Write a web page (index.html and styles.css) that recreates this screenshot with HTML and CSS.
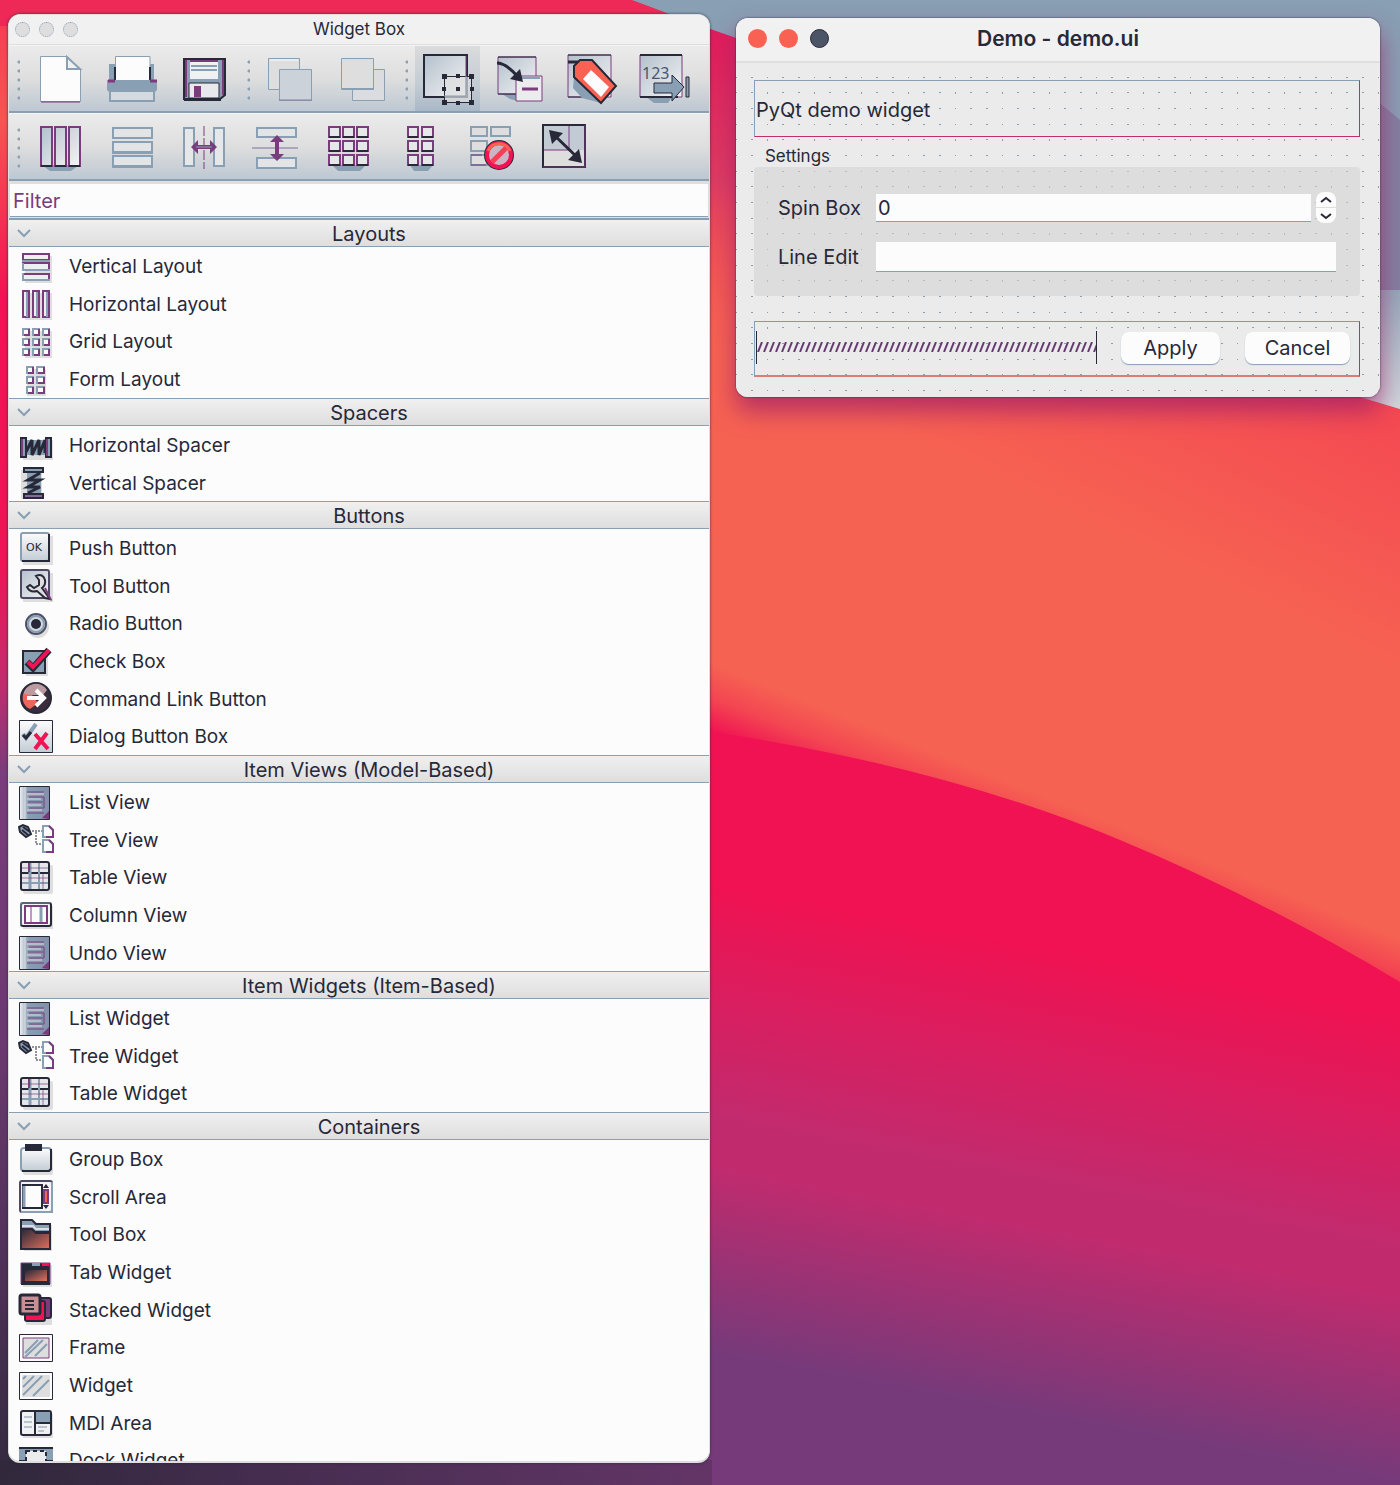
FILE: index.html
```html
<!DOCTYPE html>
<html lang="en">
<head>
<meta charset="utf-8">
<meta name="viewport" content="width=device-width, initial-scale=1">
<title>Widget Box</title>
<link rel="stylesheet" href="styles.css">
</head>
<body>
<svg class="wallpaper" viewBox="0 0 1400 1485" preserveAspectRatio="none" aria-hidden="true">
  <defs>
    <linearGradient id="wp-left" x1="0" y1="0" x2="0" y2="1">
      <stop offset="0" stop-color="#f53a54"/><stop offset=".08" stop-color="#f65552"/><stop offset=".2" stop-color="#f31354"/>
      <stop offset=".38" stop-color="#ee1656"/><stop offset=".46" stop-color="#c12d6e"/><stop offset=".52" stop-color="#7a3c7c"/>
      <stop offset=".7" stop-color="#6c3971"/><stop offset="1" stop-color="#33293f"/>
    </linearGradient>
    <linearGradient id="wp-orange" gradientUnits="userSpaceOnUse" x1="710" y1="732" x2="734" y2="672">
      <stop offset="0" stop-color="#f01252"/><stop offset=".5" stop-color="#f34552"/><stop offset="1" stop-color="#f66252"/>
    </linearGradient>
    <linearGradient id="wp-flush" gradientUnits="userSpaceOnUse" x1="1400" y1="390" x2="1290" y2="620">
      <stop offset="0" stop-color="#f01252" stop-opacity=".35"/><stop offset="1" stop-color="#f01252" stop-opacity="0"/>
    </linearGradient>
    <linearGradient id="wp-top" gradientUnits="userSpaceOnUse" x1="0" y1="40" x2="0" y2="320">
      <stop offset="0" stop-color="#e01e5c"/><stop offset=".5" stop-color="#dd3b62"/><stop offset="1" stop-color="#f55753" stop-opacity="0"/>
    </linearGradient>
    <linearGradient id="wp-low" gradientUnits="userSpaceOnUse" x1="710" y1="885" x2="625" y2="1335">
      <stop offset="0" stop-color="#f01252"/><stop offset=".5" stop-color="#c12b6e"/>
      <stop offset=".6" stop-color="#c12b6e"/><stop offset="1" stop-color="#763a7a"/>
    </linearGradient>
    <linearGradient id="wp-floor" x1="0" y1="0" x2="1" y2="0">
      <stop offset="0" stop-color="#30283b"/><stop offset=".3" stop-color="#412c4c"/><stop offset="1" stop-color="#633567"/>
    </linearGradient>
    <linearGradient id="wp-sky" gradientUnits="userSpaceOnUse" x1="0" y1="290" x2="0" y2="410">
      <stop offset="0" stop-color="#93a8ba"/><stop offset="1" stop-color="#d2d7dc"/>
    </linearGradient>
  </defs>
  <rect width="1400" height="1485" fill="url(#wp-low)"/>
  <path d="M700 0V730Q940 765 1120 840Q1260 898 1400 982V0Z" fill="url(#wp-orange)"/>
  <path d="M700 0V730Q940 765 1120 840Q1260 898 1400 982V0Z" fill="url(#wp-flush)"/>
  <rect x="700" width="700" height="330" fill="url(#wp-top)"/>
  <path d="M632 0Q690 22 736 38L1360 397L1400 409V0Z" fill="#889fb4"/>
  <path d="M1370 95L1400 120V290H1370Z" fill="#8180a0"/>
  <path d="M1360 290H1400V409L1360 397Z" fill="url(#wp-sky)"/>
  <rect width="700" height="1485" fill="url(#wp-left)"/>
  <path d="M0 0H632L705 26H0Z" fill="#ee2857"/>
  <path d="M632 0Q670 14 700 26V0Z" fill="#889fb4"/>
  <rect y="1460" width="712" height="25" fill="url(#wp-floor)"/>
</svg>

<svg class="symbols" aria-hidden="true">
  <defs>
    <linearGradient id="face" x1="0" y1="0" x2="0" y2="1"><stop offset="0" stop-color="#fcfcfc"/><stop offset="1" stop-color="#c3ccd5"/></linearGradient>
    <linearGradient id="pane" x1="0" y1="0" x2="1" y2="1"><stop offset="0" stop-color="#b4c0cc"/><stop offset="1" stop-color="#f4f4f5"/></linearGradient>
    <linearGradient id="leaf" x1="0" y1="0" x2="1" y2="0"><stop offset="0" stop-color="#f0f1f3"/><stop offset=".3" stop-color="#889fb4"/><stop offset="1" stop-color="#8390ab"/></linearGradient>
    <linearGradient id="ember" x1="0" y1="0" x2="1" y2="1"><stop offset="0" stop-color="#272838"/><stop offset="1" stop-color="#e2705c"/></linearGradient>
    <symbol id="i-list" viewBox="0 0 36 36">
      <path d="M1.500 1.500H31.500V34.500H1.500Z" fill="url(#leaf)" stroke="#272838"/>
      <path d="M7 2V34" stroke="#dedede"/>
      <path d="M9 7H26M11 12H26V23H11M10 17H25M9 28H26" fill="none" stroke="#7a3c7c"/>
      <path d="M9 9H26M9 14H23M9 20H23M9 25H24" stroke="#dedede"/>
      <path d="M24 33L31 26V34Z" fill="#7a3c7c"/>
    </symbol>
    <symbol id="i-tree" viewBox="0 0 36 36">
      <path d="M1 5L5 3L10 5L13 12L8 15L2 10Z" fill="#889fb4" stroke="#272838" stroke-width="2"/>
      <path d="M4 8L10 13M5 5L12 10" stroke="#272838" stroke-width="2"/>
      <path d="M14 9H24M18 10V22H24" fill="none" stroke="#272838" stroke-dasharray="2 1"/>
      <path d="M25 4H31L35 8V15H25ZM25 18H31L35 22V30H25Z" fill="#fcfcfc" stroke="#889fb4" stroke-width="2"/>
      <path d="M31 4L35 8V15H28M31 18L35 22V30H28" fill="none" stroke="#7a3c7c" stroke-width="2"/>
    </symbol>
    <symbol id="i-table" viewBox="0 0 36 36">
      <rect x="5" y="5" width="30" height="29" rx="2" fill="#dedede"/>
      <rect x="3" y="2" width="28" height="28" rx="2" fill="#e4e6e9" stroke="#272838" stroke-width="2"/>
      <path d="M4 13H30" stroke="#272838" stroke-width="2"/>
      <path d="M12 3V29" stroke="#889fb4" stroke-width="3"/>
      <path d="M11 3V12" stroke="#7a3c7c" stroke-width="2"/>
      <path d="M21 3V29M4 23H30" stroke="#889fb4" stroke-width="2"/>
      <path d="M4 8H30M4 18H30M25 14V29" stroke="#7a3c7c" stroke-opacity=".7"/>
    </symbol>
  </defs>
</svg>

<main class="desktop">
  <section class="window palette" aria-label="Widget Box">
    <header class="palette-title">
      <span class="lights lights-small"><i></i><i></i><i></i></span>
      <h1>Widget Box</h1>
    </header>

    <div class="toolbar" role="toolbar" aria-label="File and edit modes">
      <span class="grip"></span>
      <button type="button" aria-label="New"><svg viewBox="0 0 48 48"><path d="M4.500 1.500H31L44.500 15V46.500H4.500Z" fill="#fcfcfc" stroke="#889fb4"/><path d="M31 2V14H44Z" fill="#eef0f2" stroke="#889fb4" stroke-width="2"/><path d="M5 47H44" stroke="#7a3c7c"/></svg></button>
      <button type="button" aria-label="Print"><svg viewBox="0 0 48 48"><path d="M1 9H46V27H1Z" fill="#889fb4"/><path d="M7.500 1.500H42V26H7.500Z" fill="#fcfcfc" stroke="#889fb4"/><path d="M7 12V25M42 12V25" stroke="#272838" stroke-width="2"/><path d="M-1 25H49V35L46 38H2L-1 35Z" fill="#889fb4"/><path d="M0 26H7M42 26H49" stroke="#7a3c7c" stroke-width="3"/><path d="M2 36H46V46H2Z" fill="#d4dae0" stroke="#889fb4" stroke-width="2"/></svg></button>
      <button type="button" aria-label="Save"><svg viewBox="0 0 48 48"><path d="M4 4H45V40L40 44H4Z" fill="#889fb4" stroke="#272838" stroke-width="2"/><path d="M6 5V42M43 5V40" stroke="#7a3c7c" stroke-width="2"/><path d="M10 5H38V24H10Z" fill="#f0f1f3"/><path d="M10 6H38" stroke="#7a3c7c" stroke-width="2"/><path d="M11 11H37M11 15H37" stroke="#889fb4" stroke-width="2"/><path d="M9 28H39V43H9Z" fill="#e8e9ec" stroke="#272838"/><path d="M14 31H21V42H14Z" fill="#7a3c7c"/><path d="M4 45H41" stroke="#272838" stroke-width="2"/></svg></button>
      <span class="grip"></span>
      <button type="button" aria-label="Send to Back"><svg viewBox="0 0 48 48"><path d="M2.500 3.500H33.500V34.500H2.500Z" fill="#dedede" stroke="#889fb4"/><path d="M4 5H32" stroke="#fcfcfc"/><path d="M13.500 14.500H45.500V45.500H13.500Z" fill="#cbd2d9" stroke="#889fb4"/><path d="M13 45H46" stroke="#8a7f9f"/></svg></button>
      <button type="button" aria-label="Bring to Front"><svg viewBox="0 0 48 48"><path d="M14.500 14.500H46.500V45.500H14.500Z" fill="#dadcdf" stroke="#889fb4"/><path d="M3.500 3.500H35.500V34.500H3.500Z" fill="#dedede" stroke="#889fb4"/><path d="M4 34H36" stroke="#889fb4" stroke-width="2"/></svg></button>
      <span class="grip"></span>
      <button type="button" class="on" aria-pressed="true" aria-label="Edit Widgets"><svg viewBox="0 0 48 48"><path d="M0 0H43V42H0Z" fill="url(#pane)" stroke="#272838" stroke-width="2"/><path d="M42 1V41" stroke="#7a3c7c"/><path d="M20.500 21.500H47.500V47.500H20.500Z" fill="#dedede" fill-opacity=".7" stroke="#272838"/><path d="M42 21V41H20" fill="none" stroke="#889fb4"/><path d="M18 19h5v5h-5zM45 19h5v5h-5zM18 45h5v5h-5zM45 45h5v5h-5zM32 19h4v4h-4zM32 46h4v4h-4zM32 32h4v4h-4zM18 32h4v4h-4zM46 32h4v4h-4z" fill="#272838"/></svg></button>
      <button type="button" aria-label="Edit Signals/Slots"><svg viewBox="0 0 48 48"><path d="M6 39H22V46L14 44Z" fill="#889fb4"/><path d="M2 2H40V39H2Z" fill="url(#pane)" stroke="#7a3c7c"/><path d="M2 39H20M2 2H40" stroke="#272838"/><path d="M20 21H46V46H20Z" fill="#ececee" stroke="#7a3c7c"/><path d="M23 23H44" stroke="#889fb4" stroke-width="2"/><path d="M26 34H42" stroke="#7a3c7c" stroke-width="3"/><path d="M1 8Q10 8 22 22" fill="none" stroke="#272838" stroke-width="3"/><path d="M24 14L27 27L14 24Z" fill="#272838"/></svg></button>
      <button type="button" aria-label="Edit Buddies"><svg viewBox="0 0 48 48"><path d="M0 0H43V42H0Z" fill="url(#pane)" stroke="#7a3c7c"/><path d="M0 42H24M0 0H43" stroke="#272838"/><path d="M6 22L33 48L14 43L5 33Z" fill="#889fb4"/><path d="M6 11L12 5L24 5L48 31L33 48L6 22Z" fill="#f96252" stroke="#272838" stroke-width="2"/><path d="M23 15L41 32L33 42L15 24Z" fill="#fcfcfc"/><path d="M0 7H10" stroke="#272838" stroke-width="3"/></svg></button>
      <button type="button" aria-label="Edit Tab Order"><svg viewBox="0 0 48 48"><path d="M6 42H32L28 48H14Z" fill="#889fb4"/><path d="M0 0H42V42H0Z" fill="url(#pane)" stroke="#7a3c7c"/><path d="M0 42H38M0 0H42" stroke="#272838" stroke-width="2"/><text class="tab-digits" x="2" y="24">123</text><path d="M14 28H32V20L44 32L32 46V38H14Z" fill="#889fb4" stroke="#272838"/><path d="M46 22H49V42H46Z" fill="#889fb4" stroke="#272838"/></svg></button>
    </div>

    <div class="toolbar" role="toolbar" aria-label="Layout">
      <span class="grip"></span>
      <button type="button" aria-label="Lay Out Horizontally"><svg viewBox="0 0 48 48"><path d="M6 42H43L35 48H14Z" fill="#889fb4"/><path d="M5 4H16V43H5ZM19 4H30V43H19ZM33 4H44V43H33Z" fill="url(#pane)" stroke="#7a3c7c" stroke-width="2"/><path d="M5 43H16M19 43H30M33 43H44" stroke="#272838" stroke-width="2"/></svg></button>
      <button type="button" aria-label="Lay Out Vertically"><svg viewBox="0 0 48 48"><path d="M5 5H44V15H5ZM5 19H44V30H5ZM5 33H44V44H5Z" fill="#e3e4e6" stroke="#889fb4" stroke-width="2"/><path d="M5 15H44M5 29H44M5 43H44" stroke="#889fb4" stroke-width="2"/></svg></button>
      <button type="button" aria-label="Horizontal Splitter"><svg viewBox="0 0 48 48"><path d="M4 5H14V43H4ZM34 5H44V43H34Z" fill="#e6e7e9" stroke="#889fb4" stroke-width="2"/><path d="M24 3V46" stroke="#7a3c7c" stroke-dasharray="10 2"/><path d="M11 24L18 17V22H30V17L37 24L30 31V26H18V31Z" fill="#7a3c7c"/><path d="M16 24H32" stroke="#889fb4"/></svg></button>
      <button type="button" aria-label="Vertical Splitter"><svg viewBox="0 0 48 48"><path d="M5 5H44V14H5ZM5 35H44V45H5Z" fill="#e3e4e6" stroke="#889fb4" stroke-width="2"/><path d="M0 25H46" stroke="#7f6f9a"/><path d="M25 12L32 19H27V31H32L25 38L18 31H23V19H18Z" fill="#7a3c7c"/></svg></button>
      <button type="button" aria-label="Lay Out in a Grid"><svg viewBox="0 0 48 48"><path d="M8 42H42L36 48H14Z" fill="#889fb4"/><path d="M5 4H16V14H5ZM19 4H30V14H19ZM33 4H44V14H33ZM5 18H16V28H5ZM19 18H30V28H19ZM33 18H44V28H33ZM5 32H16V42H5ZM19 32H30V42H19ZM33 32H44V42H33Z" fill="#e6e7e9" stroke="#7a3c7c" stroke-width="2"/><path d="M5 14H16M19 14H30M33 14H44M5 28H16M19 28H30M33 28H44M5 42H16M19 42H30M33 42H44" stroke="#272838" stroke-width="2"/></svg></button>
      <button type="button" aria-label="Lay Out in a Form"><svg viewBox="0 0 48 48"><path d="M14 42H37L32 48H18Z" fill="#889fb4"/><path d="M12 4H22V14H12ZM26 4H37V14H26ZM12 18H22V28H12ZM26 18H37V28H26ZM12 32H22V42H12ZM26 32H37V42H26Z" fill="#e6e7e9" stroke="#7a3c7c" stroke-width="2"/><path d="M12 14H22M26 14H37M12 28H22M26 28H37M12 42H22M26 42H37" stroke="#272838" stroke-width="2"/></svg></button>
      <button type="button" aria-label="Break Layout"><svg viewBox="0 0 48 48"><path d="M3 4H19V13H3ZM23 4H42V13H23ZM3 18H19V28H3ZM3 32H19V42H3Z" fill="#dedede" stroke="#889fb4" stroke-width="2"/><path d="M3 32H14M3 42H18" stroke="#7a3c7c"/><circle cx="31" cy="32" r="12" fill="none" stroke="#272838" stroke-width="6"/><circle cx="31" cy="32" r="12" fill="#c9b6c4" stroke="#f31354" stroke-width="4"/><path d="M24 39L39 24" stroke="#f83e53" stroke-width="5"/><path d="M20 28A12 12 0 0 1 42 28" fill="none" stroke="#f96252" stroke-width="3"/></svg></button>
      <button type="button" aria-label="Adjust Size"><svg viewBox="0 0 48 48"><path d="M3 2H45V44H3Z" fill="#dedede" stroke="#272838" stroke-width="2"/><path d="M4 3H44V27H4Z" fill="#c2cbd4"/><path d="M29 3V27H4" fill="none" stroke="#7a3c7c"/><path d="M45 2V44H3" fill="none" stroke="#7a3c7c"/><path d="M12 10L40 37" stroke="#272838" stroke-width="3"/><path d="M9 7L23 10L12 21ZM42 40L28 37L39 26Z" fill="#272838"/></svg></button>
    </div>

    <div class="filter"><input type="text" placeholder="Filter" aria-label="Filter"></div>

    <div class="groups">
      <section>
        <h2><button type="button"><svg class="chev" viewBox="0 0 14 8"><path d="M1 1L7 7L13 1"/></svg>Layouts</button></h2>
        <ul>
          <li><svg viewBox="0 0 36 36"><path d="M7 7H34V34H7Z" fill="#dedede"/><path d="M5 5H31V11H5ZM5 14H31V21H5ZM5 25H31V31H5Z" fill="#eeeff1" stroke="#7a3c7c" stroke-width="2"/><path d="M4 12H32M4 21H32M4 31H32M5 24V32M5 14V21" stroke="#889fb4" stroke-width="2"/></svg>Vertical Layout</li>
          <li><svg viewBox="0 0 36 36"><path d="M7 7H34V34H7Z" fill="#dedede"/><path d="M5 5H11V31H5ZM15 5H21V31H15ZM25 5H31V31H25Z" fill="#eeeff1" stroke="#7a3c7c" stroke-width="2"/><path d="M9 6V31M19 6V31M29 6V31" stroke="#889fb4" stroke-width="2"/></svg>Horizontal Layout</li>
          <li><svg viewBox="0 0 36 36"><path d="M7 7H34V34H7Z" fill="#dedede"/><path d="M5 5H11V11H5ZM15 5H21V11H15ZM25 5H31V11H25ZM5 15H11V21H5ZM15 15H21V21H15ZM25 15H31V21H25ZM5 25H11V31H5ZM15 25H21V31H15ZM25 25H31V31H25Z" fill="#fcfcfc" stroke="#889fb4" stroke-width="2"/><path d="M11 5V11H6M21 5V11H16M31 5V11H26M11 15V21H6M21 15V21H16M31 15V21H26M11 25V31H6M21 25V31H16M31 25V31H26" fill="none" stroke="#7a3c7c" stroke-width="2"/></svg>Grid Layout</li>
          <li><svg viewBox="0 0 36 36"><path d="M9 7H28V34H9Z" fill="#dedede"/><path d="M9 5H15V11H9ZM19 5H26V11H19ZM9 15H15V21H9ZM19 15H26V21H19ZM9 25H15V31H9ZM19 25H26V31H19Z" fill="#fcfcfc" stroke="#889fb4" stroke-width="2"/><path d="M15 5V11H10M26 5V11H20M15 15V21H10M26 15V21H20M15 25V31H10M26 25V31H20" fill="none" stroke="#7a3c7c" stroke-width="2"/></svg>Form Layout</li>
        </ul>
      </section>
      <section>
        <h2><button type="button"><svg class="chev" viewBox="0 0 14 8"><path d="M1 1L7 7L13 1"/></svg>Spacers</button></h2>
        <ul>
          <li><svg viewBox="0 0 36 36"><path d="M5 12H35V32H5Z" fill="#dedede"/><path d="M8 12H28V27H8Z" fill="#889fb4"/><path d="M8 24L14 12V27L21 12V27L27 12V25" fill="none" stroke="#272838" stroke-width="3"/><path d="M3 10H8V29H3ZM28 10H33V29H28Z" fill="#889fb4" stroke="#272838" stroke-width="2"/><path d="M4 11V28M29 11V28" stroke="#7a3c7c" stroke-width="2"/></svg>Horizontal Spacer</li>
          <li><svg viewBox="0 0 36 36"><path d="M3 5H24V34H3Z" fill="#dedede"/><path d="M9 8H23V29H9Z" fill="#889fb4"/><path d="M10 28L22 22H10L22 15H10L22 8" fill="none" stroke="#272838" stroke-width="3"/><path d="M6 3H25V7H6ZM6 29H25V33H6Z" fill="#889fb4" stroke="#272838" stroke-width="2"/><path d="M7 31H24" stroke="#7a3c7c"/></svg>Vertical Spacer</li>
        </ul>
      </section>
      <section>
        <h2><button type="button"><svg class="chev" viewBox="0 0 14 8"><path d="M1 1L7 7L13 1"/></svg>Buttons</button></h2>
        <ul>
          <li><svg viewBox="0 0 36 36"><rect x="5" y="5" width="30" height="29" fill="#dedede"/><rect x="3" y="2" width="28" height="28" rx="2" fill="url(#face)" stroke="#889fb4" stroke-width="2"/><path d="M31 3V30H4" fill="none" stroke="#272838" stroke-width="2"/><text class="ok-mark" x="8" y="20">OK</text></svg>Push Button</li>
          <li><svg viewBox="0 0 36 36"><rect x="5" y="5" width="30" height="29" fill="#dedede"/><rect x="3" y="2" width="28" height="28" rx="2" fill="url(#pane)" stroke="#4e4a63" stroke-width="2"/><path d="M18 8Q25 5 27 12Q28 17 24 20L32 31L27 30L19 23Q12 25 9 19L12 17L16 20L21 17V12Z" fill="#dedede" stroke="#272838" stroke-width="2"/><path d="M27 20L33 32" stroke="#7a3c7c" stroke-width="2"/></svg>Tool Button</li>
          <li><svg viewBox="0 0 36 36"><circle cx="20" cy="21" r="11" fill="#dedede"/><circle cx="18" cy="18" r="10" fill="#d4dae0" stroke="#4e5068" stroke-width="2"/><circle cx="18" cy="18" r="8" fill="none" stroke="#889fb4" stroke-width="2"/><circle cx="18" cy="18" r="5" fill="#272838"/></svg>Radio Button</li>
          <li><svg viewBox="0 0 36 36"><path d="M8 9H30V32H8Z" fill="#dedede"/><path d="M5 7H27V29H5Z" fill="#889fb4" stroke="#272838" stroke-width="2"/><path d="M9 18L15 24L31 6" fill="none" stroke="#272838" stroke-width="7"/><path d="M10 18L15 23L31 6" fill="none" stroke="#f31354" stroke-width="4"/></svg>Check Box</li>
          <li><svg viewBox="0 0 36 36"><circle cx="18" cy="17" r="15" fill="#3a2c3c" stroke="#272838" stroke-width="2"/><path d="M5 14A13 13 0 0 1 29 9L25 14Z" fill="#bb9aa0"/><path d="M5 13Q3 24 12 28L20 22L14 14Z" fill="#ec6758"/><path d="M9 17H24M18 9L26 17L18 25" fill="none" stroke="#fcfcfc" stroke-width="4"/></svg>Command Link Button</li>
          <li><svg viewBox="0 0 36 36"><path d="M1.500 1.500H34.500V33.500H1.500Z" fill="url(#face)" stroke="#272838"/><path d="M5 15L8 19L18 5" fill="none" stroke="#889fb4" stroke-width="4"/><path d="M5 16L8 19L13 13" fill="none" stroke="#272838" stroke-width="3"/><path d="M17 15L30 30M29 14L17 30" stroke="#f31354" stroke-width="4"/></svg>Dialog Button Box</li>
        </ul>
      </section>
      <section>
        <h2><button type="button"><svg class="chev" viewBox="0 0 14 8"><path d="M1 1L7 7L13 1"/></svg>Item Views (Model-Based)</button></h2>
        <ul>
          <li><svg><use href="#i-list"/></svg>List View</li>
          <li><svg><use href="#i-tree"/></svg>Tree View</li>
          <li><svg><use href="#i-table"/></svg>Table View</li>
          <li><svg viewBox="0 0 36 36"><rect x="5" y="8" width="30" height="23" fill="#dedede"/><rect x="3" y="5" width="30" height="23" rx="2" fill="#f4f4f4" stroke="#272838" stroke-width="2"/><path d="M3 27V5H32" fill="none" stroke="#889fb4"/><path d="M7 8H29V25H7Z" fill="#fcfcfc" stroke="#7a3c7c" stroke-width="2"/><path d="M13 9V24" stroke="#7a3c7c"/><path d="M23 9V24" stroke="#889fb4" stroke-width="3"/></svg>Column View</li>
          <li><svg><use href="#i-list"/></svg>Undo View</li>
        </ul>
      </section>
      <section>
        <h2><button type="button"><svg class="chev" viewBox="0 0 14 8"><path d="M1 1L7 7L13 1"/></svg>Item Widgets (Item-Based)</button></h2>
        <ul>
          <li><svg><use href="#i-list"/></svg>List Widget</li>
          <li><svg><use href="#i-tree"/></svg>Tree Widget</li>
          <li><svg><use href="#i-table"/></svg>Table Widget</li>
        </ul>
      </section>
      <section>
        <h2><button type="button"><svg class="chev" viewBox="0 0 14 8"><path d="M1 1L7 7L13 1"/></svg>Containers</button></h2>
        <ul>
          <li><svg viewBox="0 0 36 36"><rect x="5" y="8" width="30" height="25" rx="2" fill="#dedede"/><rect x="3" y="6" width="30" height="23" rx="3" fill="url(#face)" stroke="#889fb4" stroke-width="2"/><path d="M33 7V27L31 29H4" fill="none" stroke="#272838" stroke-width="2"/><path d="M7 2H24V9H7Z" fill="#272838"/></svg>Group Box</li>
          <li><svg viewBox="0 0 36 36"><rect x="2" y="2" width="32" height="31" rx="2" fill="#f4f4f4" stroke="#4e4a63" stroke-width="2"/><path d="M3 33H34V3" fill="none" stroke="#889fb4" stroke-width="2"/><path d="M5 6H24V29H5Z" fill="#fcfcfc" stroke="#272838" stroke-width="2"/><path d="M6 7V28" stroke="#889fb4" stroke-width="3"/><path d="M25 9L28 5L31 9ZM25 26L28 30L31 26Z" fill="#272838"/><path d="M26 11H30V24H26Z" fill="#f96252" stroke="#7a3c7c" stroke-width="2"/></svg>Scroll Area</li>
          <li><svg viewBox="0 0 36 36"><path d="M6 8H34V34H6Z" fill="#dedede"/><path d="M3 3H14L18 7H32V15H3Z" fill="#889fb4" stroke="#272838" stroke-width="2"/><path d="M4 9H15L18 12H31" fill="none" stroke="#dedede" stroke-width="2"/><path d="M3 12H14L18 16H32V32H3Z" fill="url(#ember)" stroke="#272838" stroke-width="2"/></svg>Tool Box</li>
          <li><svg viewBox="0 0 36 36"><path d="M5 10H34V32H5Z" fill="#dedede"/><path d="M3 8H32V29H3Z" fill="#272838" stroke="#7a3c7c"/><path d="M14 8H22V11H14Z" fill="#889fb4"/><path d="M24 8H31V11H24Z" fill="#f31354"/><path d="M7 15H29V26H7Z" fill="url(#ember)"/><path d="M3 29H32" stroke="#272838" stroke-width="2"/></svg>Tab Widget</li>
          <li><svg viewBox="0 0 36 36"><rect x="8" y="9" width="26" height="24" fill="#dedede"/><rect x="14" y="6" width="19" height="20" rx="2" fill="#7a3c7c" stroke="#272838" stroke-width="2"/><rect x="7" y="9" width="20" height="20" rx="2" fill="#f31354" stroke="#272838" stroke-width="2"/><rect x="2" y="3" width="20" height="19" rx="2" fill="#c98e92" stroke="#272838" stroke-width="3"/><path d="M7 9H16M7 13H16M7 17H16" stroke="#272838" stroke-width="2"/></svg>Stacked Widget</li>
          <li><svg viewBox="0 0 36 36"><path d="M1.500 4.500H34.500V31.500H1.500Z" fill="#fcfcfc" stroke="#272838"/><path d="M5 8H31V28H5Z" fill="#dedede" stroke="#7a3c7c"/><path d="M7 23L20 10M7 27L25 10M17 26L29 14" stroke="#889fb4" stroke-width="2"/></svg>Frame</li>
          <li><svg viewBox="0 0 36 36"><path d="M1.500 4.500H34.500V31.500H1.500Z" fill="#fcfcfc" stroke="#272838"/><path d="M4 7H32V29H4Z" fill="#dedede"/><path d="M5 19L16 8M5 27L24 8M15 28L31 12M5 11L8 8" stroke="#889fb4" stroke-width="2"/></svg>Widget</li>
          <li><svg viewBox="0 0 36 36"><rect x="5" y="9" width="30" height="24" fill="#dedede"/><rect x="3" y="6" width="30" height="24" rx="2" fill="#f0f1f3" stroke="#272838" stroke-width="2"/><path d="M18 7H32V17H18Z" fill="#889fb4"/><path d="M17 6V30M17 18H33" stroke="#272838" stroke-width="2"/><path d="M6 12H14M6 17H14M6 22H14M20 22H29M20 26H26" stroke="#b9c4ce" stroke-width="2"/></svg>MDI Area</li>
          <li><svg viewBox="0 0 36 36"><path d="M1 4H35V34H1Z" fill="#889fb4"/><path d="M1 5H35" stroke="#272838" stroke-width="2"/><rect x="8" y="8" width="20" height="20" fill="#ececee" stroke="#272838" stroke-width="2" stroke-dasharray="4 3"/><path d="M1 17H7V21H1ZM29 17H35V21H29Z" fill="#272838"/></svg>Dock Widget</li>
        </ul>
      </section>
    </div>
  </section>

  <section class="window demo" aria-label="Demo">
    <header class="demo-title">
      <span class="lights"><i class="red"></i><i class="red"></i><i class="slate"></i></span>
      <h1>Demo - demo.ui</h1>
    </header>
    <form class="canvas">
      <p class="frame heading">PyQt demo widget</p>
      <fieldset>
        <legend>Settings</legend>
        <div class="fields">
          <label for="spin">Spin Box</label>
          <div class="spin">
            <input id="spin" type="text" inputmode="numeric" role="spinbutton" aria-valuenow="0" value="0">
            <span class="stepper">
              <button type="button" aria-label="Increase"><svg viewBox="0 0 12 8"><path d="M1 6L6 2L11 6"/></svg></button>
              <button type="button" aria-label="Decrease"><svg viewBox="0 0 12 8"><path d="M1 2L6 6L11 2"/></svg></button>
            </span>
          </div>
          <label for="line">Line Edit</label>
          <input id="line" type="text">
        </div>
      </fieldset>
      <div class="frame actions">
        <span class="spacer"></span>
        <button type="button">Apply</button>
        <button type="button" class="wide">Cancel</button>
      </div>
    </form>
  </section>
</main>
</body>
</html>
```
FILE: styles.css
```css
:root {
  --ink: #272838;
  --steel: #889fb4;
  --plum: #7a3c7c;
  --rose: #c12d6e;
  --coral: #f96252;
  --grey: #dedede;
  --white: #fcfcfc;
}

* { box-sizing: border-box; }

body {
  margin: 0;
  color: var(--ink);
  background: var(--plum);
  font-family: Inter, "Liberation Sans", sans-serif;
  font-size: 19px;
}

h1, h2, p, ul { margin: 0; padding: 0; font-weight: 400; }
ul { list-style: none; }
button, input { font: inherit; color: inherit; border: 0; border-radius: 0; padding: 0; margin: 0; }
button { background: none; }
svg { display: block; overflow: visible; }

.symbols { position: absolute; width: 0; height: 0; }
.wallpaper { position: absolute; inset: 0; width: 100%; height: 100%; overflow: hidden; }

.desktop {
  position: relative;
  display: flex;
  align-items: flex-start;
  gap: 26px;
  height: 100vh;
  padding: 14px 20px 22px 8px;
}

.window { overflow: hidden; border-radius: 12px; min-width: 0; }

.lights { position: absolute; left: 12px; display: flex; gap: 12px; }
.lights i { width: 19px; height: 19px; border-radius: 50%; }
.lights .red { background: var(--coral); }
.lights .slate { background: #4c5568; border: 1px solid var(--ink); }
.lights-small { left: 6px; gap: 9px; }
.lights-small i { width: 15px; height: 15px; background: var(--grey); border: 1px dotted var(--steel); }

/* widget palette */
.palette {
  flex: 701 1 0;
  display: flex;
  flex-direction: column;
  height: 100%;
  background: var(--white);
  border: 1px solid var(--grey);
  border-bottom-width: 2px;
  box-shadow: 0 0 3px rgba(39, 40, 56, .8);
}

.palette-title, .demo-title {
  position: relative;
  flex: none;
  display: flex;
  align-items: center;
  justify-content: center;
  background: #f1f1f1;
}
.palette-title { height: 30px; padding-bottom: 1px; border-bottom: 1px solid var(--grey); }
.palette-title h1 { font-size: 17px; }

.toolbar {
  flex: none;
  display: flex;
  align-items: center;
  gap: 7px;
  height: 68px;
  padding-left: 4px;
  background: linear-gradient(#ebebeb, #dedede 50%, #bdc8d2);
  border-bottom: 2px solid var(--steel);
  border-top: 1px solid #f4f4f4;
}
.toolbar button { width: 65px; height: 65px; display: grid; place-items: center; }
.toolbar button.on { background: linear-gradient(#dadbdc, #c3ccd4 60%, #a9b8c6); }
.toolbar svg { width: 48px; height: 48px; }
.tab-digits { font: 16px "Noto Sans", sans-serif; fill: #4a5670; }
.grip {
  width: 7px;
  height: 42px;
  background: radial-gradient(circle at 6px 4px, var(--steel) 1px, transparent 2px) 0 0 / 8px 9px;
}

.filter { flex: none; padding: 3px 1px 1px; background: var(--grey); border-bottom: 1px solid var(--steel); }
.filter input {
  display: block;
  width: 100%;
  height: 33px;
  padding: 1px 3px 0;
  font-size: 20px;
  background: var(--white);
  border-bottom: 1px solid var(--steel);
}
.filter input::placeholder { color: var(--plum); opacity: 1; }

.groups { flex: 1; min-height: 0; overflow: hidden; }
.groups h2 button {
  position: relative;
  display: block;
  width: 100%;
  height: 28px;
  padding: 2px 0 0 20px;
  font-size: 20px;
  line-height: 24px;
  text-align: center;
  background: linear-gradient(#f0f0f0, #dedede);
  border-top: 1px solid var(--steel);
  border-bottom: 1px solid var(--steel);
}
.chev { position: absolute; left: 8px; top: 9px; width: 14px; height: 8px; }
.chev path { fill: none; stroke: var(--steel); stroke-width: 2; }
.groups li {
  display: flex;
  align-items: center;
  gap: 15px;
  height: 38px;
  padding: 1px 0 0 9px;
}
.groups li:nth-child(3n+2) { height: 37px; }
.groups li svg { flex: none; width: 36px; height: 36px; }
.ok-mark { font: 11px "DejaVu Sans", sans-serif; fill: var(--ink); }

/* form preview */
.demo {
  flex: 645 1 0;
  margin-top: 4px;
  background: #ececec;
  box-shadow: 0 0 2px var(--ink), 0 14px 24px rgba(162, 32, 104, .75);
}
.demo-title { height: 43px; padding-bottom: 2px; }
.demo-title h1 { font-size: 21px; font-weight: 600; }

.canvas {
  padding: 17px 20px 20px 18px;
  font-size: 20px;
  border-top: 2px solid var(--grey);
  background-color: #ebebeb;
  background-origin: border-box;
  background-position: 15px 0;
  background-image: url("data:image/svg+xml,%3Csvg xmlns='http://www.w3.org/2000/svg' width='47' height='47'%3E%3Cg fill='%23889fb4'%3E%3Cpath d='M0 0h2v1H0zM16 0h1v1h-1zM31 0h2v1h-2zM0 16h2v1H0zM16 16h1v1h-1zM31 16h2v1h-2zM0 31h2v1H0zM16 31h1v2h-1zM31 31h2v1h-2z'/%3E%3C/g%3E%3C/svg%3E");
}
.frame { display: flex; align-items: center; height: 57px; border: 1px solid var(--steel); }
.heading { padding: 2px 0 0 1px; border-right-color: var(--rose); border-bottom-color: var(--rose); }

fieldset { min-width: 0; margin: 0; padding: 0; border: 0; }
legend { padding: 8px 0 0 11px; font-size: 17px; line-height: 22px; }
.fields {
  display: grid;
  grid-template-columns: auto 1fr;
  align-items: center;
  column-gap: 15px;
  row-gap: 19px;
  padding: 25px 24px 24px;
  border-radius: 4px;
  background: rgba(212, 212, 214, .6);
}
.fields input { width: 100%; min-width: 0; height: 30px; padding: 0 2px; background: var(--white); border-bottom: 1px solid var(--steel); }
.spin { display: flex; align-items: center; gap: 5px; }
.fields .spin input { height: 28px; padding-top: 2px; }
.stepper { flex: none; display: flex; flex-direction: column; gap: 1px; height: 31px; width: 20px; border-radius: 8px; overflow: hidden; background: var(--grey); }
.stepper button { flex: 1; display: grid; place-items: center; background: var(--white); }
.stepper svg { width: 12px; height: 8px; }
.stepper path { fill: none; stroke: var(--ink); stroke-width: 2; }

.actions { height: 56px; margin-top: 25px; padding: 0 9px 2px 1px; border-top-color: #bd8285; border-right-color: var(--rose); border-bottom: 2px solid #d87e72; }
.spacer {
  flex: 1;
  height: 33px;
  margin-right: 24px;
  border: 1px solid var(--ink);
  border-width: 0 1px;
  background: url("data:image/svg+xml,%3Csvg xmlns='http://www.w3.org/2000/svg' width='6' height='10'%3E%3Cpath d='M1 10L5 0' stroke='%23663a70' stroke-width='2'/%3E%3C/svg%3E") 0 11px repeat-x;
}
.actions button {
  width: 99px;
  height: 32px;
  margin-right: 25px;
  border-radius: 8px;
  background: var(--white);
  box-shadow: 0 1px 1px var(--steel);
}
.actions button.wide { width: 105px; margin-right: 0; }
```
